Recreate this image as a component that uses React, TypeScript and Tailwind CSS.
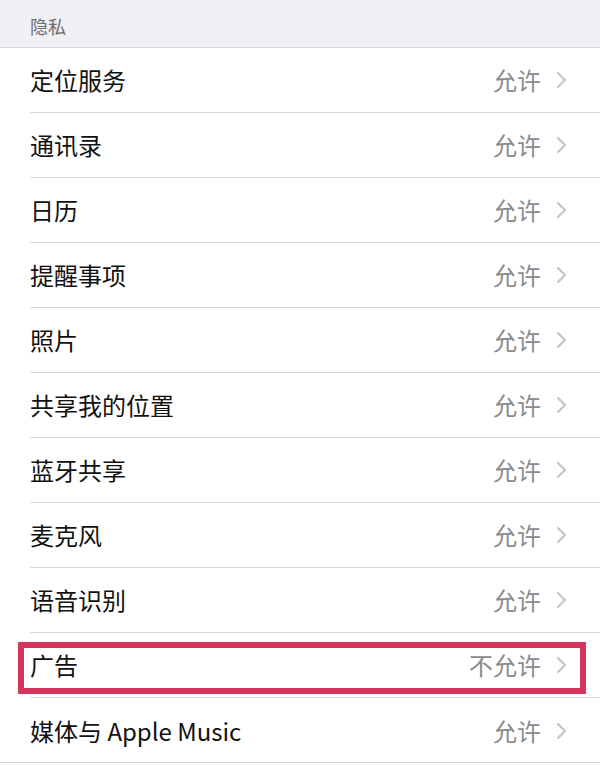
import React from "react";

const rows: { label: string; value: string; highlight?: boolean }[] = [
  { label: "定位服务", value: "允许" },
  { label: "通讯录", value: "允许" },
  { label: "日历", value: "允许" },
  { label: "提醒事项", value: "允许" },
  { label: "照片", value: "允许" },
  { label: "共享我的位置", value: "允许" },
  { label: "蓝牙共享", value: "允许" },
  { label: "麦克风", value: "允许" },
  { label: "语音识别", value: "允许" },
  { label: "广告", value: "不允许", highlight: true },
  { label: "媒体与 Apple Music", value: "允许" },
];

function Chevron() {
  return (
    <svg width="11" height="18" viewBox="0 0 11 18" className="shrink-0">
      <path d="M2 2 L9 9 L2 16" fill="none" stroke="#c4c4c9" strokeWidth="2.2" strokeLinecap="round" strokeLinejoin="round" />
    </svg>
  );
}

export default function App() {
  return (
    <div
      className="w-[600px] h-[766px] bg-white overflow-hidden"
      style={{ fontFamily: '"Noto Sans CJK SC", "Noto Sans", sans-serif' }}
    >
      <div className="h-[48px] bg-[#efeff4] border-b border-[#d6d6da] flex items-end pl-[30px] pb-[12px]">
        <span className="text-[18px] leading-none text-[#6d6d72]">隐私</span>
      </div>
      {rows.map((r, i) => (
        <div key={r.label} className="relative h-[65px] flex">
          <div className="w-[30px] shrink-0" />
          <div
            className={
              "flex-1 flex items-center pr-[33px] " +
              (i === rows.length - 1 ? "" : "border-b border-[#d9d9dd]")
            }
          >
            <span className="flex-1 text-[24px] leading-none text-[#111]">{r.label}</span>
            <span className="text-[24px] leading-none text-[#8a8a8f] mr-[15px]">{r.value}</span>
            <Chevron />
          </div>
          {i === rows.length - 1 && (
            <div className="absolute left-0 right-0 bottom-0 border-b border-[#d6d6da]" />
          )}
          {r.highlight && (
            <div className="absolute left-[18px] right-[14px] top-[9px] bottom-[4px] border-[6px] border-[#d5345b]" />
          )}
        </div>
      ))}
    </div>
  );
}
